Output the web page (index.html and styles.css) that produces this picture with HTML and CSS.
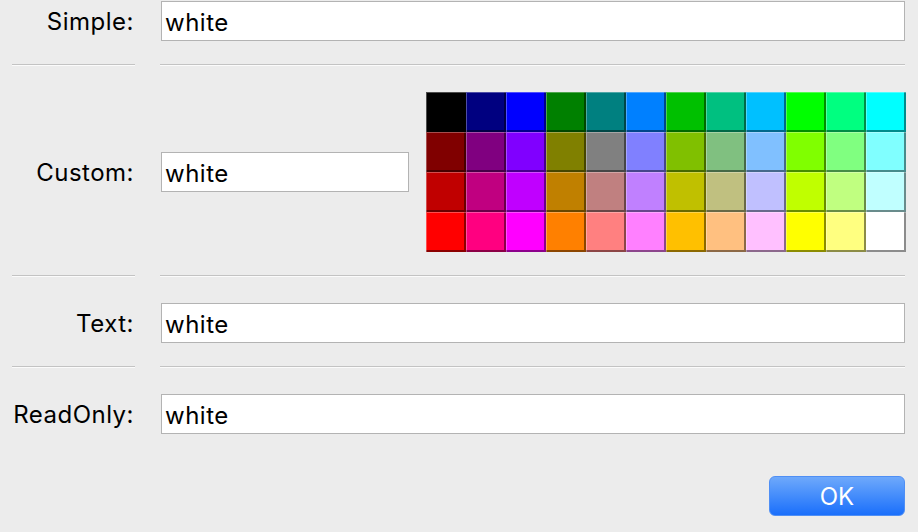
FILE: index.html
```html
<!DOCTYPE html>
<html>
<head>
<meta charset="utf-8">
<link rel="stylesheet" href="styles.css">
</head>
<body>
<div class="form">
  <div class="row">
    <label class="lbl">Simple:</label>
    <div class="field"><input class="txt" type="text" value="white"></div>
  </div>
  <div class="sep"><span></span><span></span></div>
  <div class="row">
    <label class="lbl">Custom:</label>
    <div class="field custom">
      <input class="txt short" type="text" value="white">
      <div class="palette">
        <div class="cell" style="background:#000000"></div>
        <div class="cell" style="background:#000080"></div>
        <div class="cell" style="background:#0000ff"></div>
        <div class="cell" style="background:#008000"></div>
        <div class="cell" style="background:#008080"></div>
        <div class="cell" style="background:#0080ff"></div>
        <div class="cell" style="background:#00c000"></div>
        <div class="cell" style="background:#00c080"></div>
        <div class="cell" style="background:#00c0ff"></div>
        <div class="cell" style="background:#00ff00"></div>
        <div class="cell" style="background:#00ff80"></div>
        <div class="cell" style="background:#00ffff"></div>
        <div class="cell" style="background:#800000"></div>
        <div class="cell" style="background:#800080"></div>
        <div class="cell" style="background:#8000ff"></div>
        <div class="cell" style="background:#808000"></div>
        <div class="cell" style="background:#808080"></div>
        <div class="cell" style="background:#8080ff"></div>
        <div class="cell" style="background:#80c000"></div>
        <div class="cell" style="background:#80c080"></div>
        <div class="cell" style="background:#80c0ff"></div>
        <div class="cell" style="background:#80ff00"></div>
        <div class="cell" style="background:#80ff80"></div>
        <div class="cell" style="background:#80ffff"></div>
        <div class="cell" style="background:#c00000"></div>
        <div class="cell" style="background:#c00080"></div>
        <div class="cell" style="background:#c000ff"></div>
        <div class="cell" style="background:#c08000"></div>
        <div class="cell" style="background:#c08080"></div>
        <div class="cell" style="background:#c080ff"></div>
        <div class="cell" style="background:#c0c000"></div>
        <div class="cell" style="background:#c0c080"></div>
        <div class="cell" style="background:#c0c0ff"></div>
        <div class="cell" style="background:#c0ff00"></div>
        <div class="cell" style="background:#c0ff80"></div>
        <div class="cell" style="background:#c0ffff"></div>
        <div class="cell" style="background:#ff0000"></div>
        <div class="cell" style="background:#ff0080"></div>
        <div class="cell" style="background:#ff00ff"></div>
        <div class="cell" style="background:#ff8000"></div>
        <div class="cell" style="background:#ff8080"></div>
        <div class="cell" style="background:#ff80ff"></div>
        <div class="cell" style="background:#ffc000"></div>
        <div class="cell" style="background:#ffc080"></div>
        <div class="cell" style="background:#ffc0ff"></div>
        <div class="cell" style="background:#ffff00"></div>
        <div class="cell" style="background:#ffff80"></div>
        <div class="cell" style="background:#ffffff"></div>
      </div>
    </div>
  </div>
  <div class="sep"><span></span><span></span></div>
  <div class="row">
    <label class="lbl">Text:</label>
    <div class="field"><input class="txt" type="text" value="white"></div>
  </div>
  <div class="sep"><span></span><span></span></div>
  <div class="row">
    <label class="lbl">ReadOnly:</label>
    <div class="field"><input class="txt" type="text" value="white" readonly></div>
  </div>
  <div class="actions">
    <button class="ok" type="button">OK</button>
  </div>
</div>
</body>
</html>
```

FILE: styles.css
```css
html, body {
  margin: 0;
  padding: 0;
  background: #ececec;
}

body {
  font-family: Inter, "Liberation Sans", sans-serif;
  color: #000;
  width: 918px;
  height: 532px;
  overflow: hidden;
}

.form {
  padding: 1px 13px 0 12px;
}

.row {
  display: grid;
  grid-template-columns: 123px 745px;
  column-gap: 25px;
  align-items: center;
}

.lbl {
  box-sizing: border-box;
  height: 40px;
  text-align: right;
  font-size: 24px;
  letter-spacing: 0.5px;
  padding: 2px 1px 0 0;
  line-height: 38px;
  color: #000;
  white-space: nowrap;
}

.field {
  display: flex;
  align-items: center;
}

.txt {
  box-sizing: border-box;
  margin: 0 0 0 1px;
  width: 744px;
  height: 40px;
  border: 1px solid #b3b3b3;
  background: #fff;
  padding: 2px 3px 0;
  font-family: Inter, "Liberation Sans", sans-serif;
  font-size: 24px;
  letter-spacing: 0.5px;
  color: #000;
  outline: none;
}

.txt.short {
  width: 248px;
  flex: none;
}

.custom {
  gap: 17px;
}

.palette {
  display: grid;
  grid-template-columns: repeat(12, 40px);
  grid-template-rows: repeat(4, 40px);
}

.cell {
  box-shadow: inset 1px 1px 0 rgba(255, 255, 255, 0.3),
              inset -2px -2px 0 rgba(0, 0, 0, 0.45);
}

.sep {
  display: grid;
  grid-template-columns: 123px 745px;
  column-gap: 25px;
  margin: 23px 0 26px;
}

.sep span {
  display: block;
  height: 1px;
  background: #c3c3c3;
  border-bottom: 1px solid #fbfbfb;
}

.actions {
  display: flex;
  justify-content: flex-end;
  margin-top: 42px;
}

.ok {
  width: 136px;
  height: 40px;
  border: 1px solid #4f8ff5;
  border-radius: 6px;
  background: linear-gradient(#6ea9fb, #1a6ffb);
  color: #fff;
  font-family: Inter, "Liberation Sans", sans-serif;
  font-size: 24px;
  padding: 0;
}
```
